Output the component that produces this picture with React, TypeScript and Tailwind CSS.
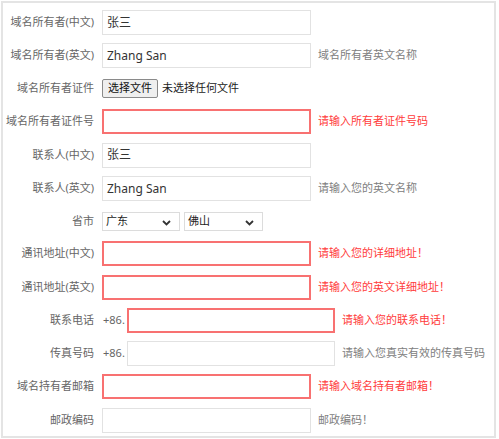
import { ReactNode } from "react";

const font = { fontFamily: '"Noto Sans", "Noto Sans CJK SC", sans-serif' };

function Chevron() {
  return (
    <svg width="9" height="6" viewBox="0 0 9 6" className="absolute right-[8px] top-[7px]">
      <polyline points="1,1 4.5,4.5 8,1" fill="none" stroke="#333" strokeWidth="1.8" />
    </svg>
  );
}

function TextBox({ value, error, wide }: { value?: string; error?: boolean; wide?: boolean }) {
  return (
    <div
      className={`flex items-center h-[25px] ${wide ? "w-[208px]" : "w-[209px]"} px-[4px] bg-white text-[12px] text-[#333] ${
        error ? "border-2 border-[#f87171]" : "border border-[#e2e2e2]"
      }`}
    >
      {value}
    </div>
  );
}

function Row({ label, h, children }: { label: string; h: string; children: ReactNode }) {
  return (
    <div className={`flex items-center ${h}`}>
      <div className="w-[91px] text-right text-[11px] text-[#666] whitespace-nowrap">{label}</div>
      <div className="ml-[8px] flex items-center">{children}</div>
    </div>
  );
}

function Hint({ text, red }: { text: string; red?: boolean }) {
  return (
    <span className={`ml-[7px] text-[11px] whitespace-nowrap ${red ? "text-[#ff3b3b]" : "text-[#808080]"}`}>{text}</span>
  );
}

export default function App() {
  return (
    <div className="w-[499px] h-[439px] bg-white p-px" style={font}>
      <div className="w-[495px] h-[437px] border-2 border-[#e4e4e4] pt-[3px]">
        <Row label="域名所有者(中文)" h="h-[33px]">
          <TextBox value="张三" />
        </Row>
        <Row label="域名所有者(英文)" h="h-[33px]">
          <TextBox value="Zhang San" />
          <Hint text="域名所有者英文名称" />
        </Row>
        <Row label="域名所有者证件" h="h-[33px]">
          <button className="h-[19px] w-[56px] border border-[#8a8a8a] rounded-[2px] bg-[#efefef] text-[11px] text-[#111]">
            选择文件
          </button>
          <span className="ml-[4px] text-[11px] text-[#222]">未选择任何文件</span>
        </Row>
        <Row label="域名所有者证件号" h="h-[33px]">
          <TextBox error />
          <Hint text="请输入所有者证件号码" red />
        </Row>
        <Row label="联系人(中文)" h="h-[34px]">
          <TextBox value="张三" />
        </Row>
        <Row label="联系人(英文)" h="h-[33px]">
          <TextBox value="Zhang San" />
          <Hint text="请输入您的英文名称" />
        </Row>
        <Row label="省市" h="h-[32px]">
          <div className="relative h-[19px] w-[78px] border border-[#dcdcdc] px-[3px] text-[11px] text-[#222] flex items-center">
            广东
            <Chevron />
          </div>
          <div className="relative ml-[4px] h-[19px] w-[79px] border border-[#dcdcdc] px-[3px] text-[11px] text-[#222] flex items-center">
            佛山
            <Chevron />
          </div>
        </Row>
        <Row label="通讯地址(中文)" h="h-[33px]">
          <TextBox error />
          <Hint text="请输入您的详细地址！" red />
        </Row>
        <Row label="通讯地址(英文)" h="h-[34px]">
          <TextBox error />
          <Hint text="请输入您的英文详细地址！" red />
        </Row>
        <Row label="联系电话" h="h-[33px]">
          <span className="w-[24px] ml-[1px] text-[11px] text-[#666]">+86.</span>
          <TextBox error wide />
          <Hint text="请输入您的联系电话！" red />
        </Row>
        <Row label="传真号码" h="h-[33px]">
          <span className="w-[24px] ml-[1px] text-[11px] text-[#666]">+86.</span>
          <TextBox wide />
          <Hint text="请输入您真实有效的传真号码" />
        </Row>
        <Row label="域名持有者邮箱" h="h-[33px]">
          <TextBox error />
          <Hint text="请输入域名持有者邮箱！" red />
        </Row>
        <Row label="邮政编码" h="h-[34px]">
          <TextBox />
          <Hint text="邮政编码！" />
        </Row>
      </div>
    </div>
  );
}
